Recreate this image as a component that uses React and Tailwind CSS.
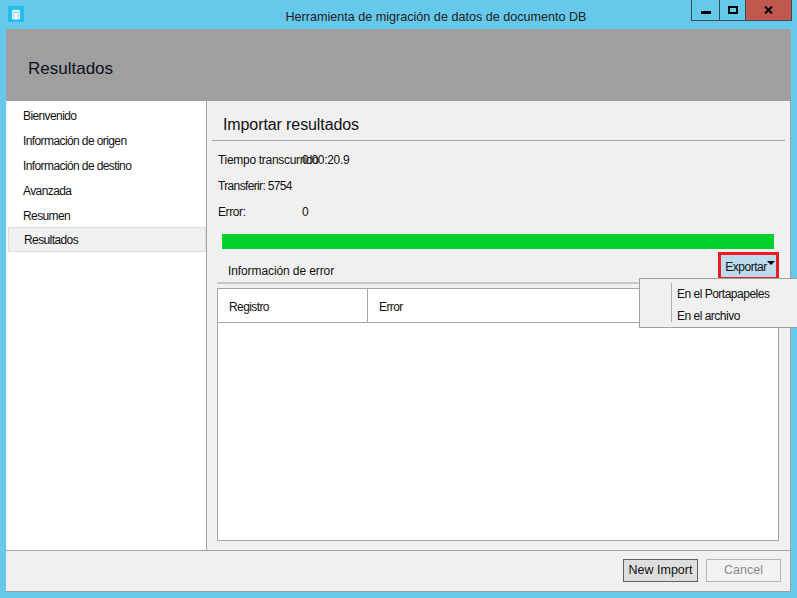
import React from "react";

const NAV_ITEMS = [
  "Bienvenido",
  "Información de origen",
  "Información de destino",
  "Avanzada",
  "Resumen",
];

const STATS = [
  { label: "Tiempo transcurrido", value: "0:00:20.9", tracking: "tracking-[-0.3px]" },
  { label: "Transferir: 5754", value: "", tracking: "tracking-[-0.65px]" },
  { label: "Error:", value: "0", tracking: "tracking-[-0.4px]" },
];

const App = () => {
  return (
    <div className="flex h-[598px] w-[797px] flex-col overflow-hidden bg-[#66c8ea] text-[12px] text-[#111] [font-family:'Liberation_Sans',Arial,sans-serif]">
      {/* title bar */}
      <div className="relative flex h-[29px] shrink-0 items-start justify-center">
        <div className="absolute left-[8px] top-[6px] flex h-[16px] w-[16px] items-center justify-center bg-[#23bdf0]">
          <svg width="10" height="11" viewBox="0 0 10 11" fill="none">
            <path d="M1 2C1 0.4 9 0.4 9 2V9.5C9 10.8 1 10.8 1 9.5Z" fill="#fff" />
            <path d="M1.5 2.8C3 3.8 7 3.8 8.5 2.8" stroke="#23bdf0" strokeWidth="0.8" />
            <path d="M3 5v4M7 5v4" stroke="#7fd6f5" strokeWidth="1.2" />
          </svg>
        </div>
        <span className="mt-[9px] pl-[75px] text-[12.6px] leading-[16px] text-[#222]">
          Herramienta de migración de datos de documento DB
        </span>
        <div className="absolute left-[691px] top-0 flex h-[21px] w-[101px] border border-t-0 border-[#3c4a55]">
          <div className="flex w-[27px] justify-center pt-[11px]">
            <div className="h-[3px] w-[10px] bg-black" />
          </div>
          <div className="flex w-[26px] justify-center border-l border-[#3c4a55] pt-[6px]">
            <div className="h-[8px] w-[10px] border-2 border-black" />
          </div>
          <div className="flex flex-1 justify-center border-l border-[#3c4a55] bg-[#c0584e] pt-[6px]">
            <svg width="9" height="8" viewBox="0 0 9 8">
              <path d="M1 0.5L8 7.5M8 0.5L1 7.5" stroke="#000" strokeWidth="2" />
            </svg>
          </div>
        </div>
      </div>

      {/* window body */}
      <div className="ml-[6px] flex h-[563px] w-[785px] flex-col border-b border-r border-[#a0a0a0] bg-[#f0f0f0]">
        <div className="flex h-[72px] shrink-0 items-center bg-[#9f9f9f] pl-[22px] pt-[7px] text-[17px] text-[#0b1020]">
          Resultados
        </div>

        <div className="flex min-h-0 flex-1">
          {/* sidebar */}
          <div className="w-[201px] shrink-0 border-x border-l-[#f0f0f0] border-r-[#a5a5a5] bg-white pl-[1px] pt-[2px]">
            {NAV_ITEMS.map((item) => (
              <div key={item} className="flex h-[25px] items-center pl-[15px] tracking-[-0.6px]">
                {item}
              </div>
            ))}
            <div className="-mt-[1px] flex h-[25px] items-center border border-[#dcdcdc] bg-[#f0f0f0] pl-[15px] pt-[1px] tracking-[-0.6px]">
              Resultados
            </div>
          </div>

          {/* main panel */}
          <div className="relative flex min-w-0 flex-1 flex-col">
            <div className="ml-[5px] mr-[5px] flex h-[40px] shrink-0 items-center border-b border-[#a5a5a5] pl-[11px] pt-[9px] text-[16px] tracking-[-0.1px]">
              Importar resultados
            </div>

            <div className="pl-[11px] pt-[6px]">
              {STATS.map((stat) => (
                <div key={stat.label} className={"flex h-[26px] items-center " + stat.tracking}>
                  <span className="w-[84px] whitespace-nowrap">{stat.label}</span>
                  <span className="whitespace-nowrap">{stat.value}</span>
                </div>
              ))}
            </div>

            <div className="ml-[15px] mt-[9px] h-[15px] w-[552px] shrink-0 bg-[#00d12c]" />

            <div className="ml-[10px] mr-[11px] flex h-[35px] shrink-0 items-end justify-between border-b-2 border-[#c8c8c8]">
              <span className="pb-[2px] pl-[11px] tracking-[-0.1px]">Información de error</span>
              <div className="mb-[2px] flex h-[28px] w-[61px] items-center justify-center border-[3px] border-[#ed1c24] bg-[#bcdcee] pl-[3px] pt-[2px] tracking-[-0.5px]">
                Exportar
                <span className="mb-[9px] h-0 w-0 border-x-[4px] border-t-[4px] border-x-transparent border-t-black" />
              </div>
            </div>

            <div className="mb-[9px] ml-[10px] mr-[11px] mt-[4px] flex min-h-0 flex-1 flex-col border border-[#a5a5a5] bg-white">
              <div className="flex h-[34px] shrink-0 border-b border-[#a5a5a5] pt-[0px]">
                <div className="flex w-[150px] items-center border-r border-[#a5a5a5] pl-[11px] pt-[3px] tracking-[-0.6px]">
                  Registro
                </div>
                <div className="flex flex-1 items-center pl-[11px] pt-[3px] tracking-[-0.6px]">Error</div>
              </div>
            </div>

            {/* dropdown menu */}
            <div className="absolute left-[432px] top-[177px] h-[50px] w-[160px] border border-[#a0a0a0] bg-[#f0f0f0] pl-[37px] pt-[4px] tracking-[-0.5px]">
              <div className="absolute bottom-[5px] left-[31px] top-[4px] w-px bg-[#b0b0b0]" />
              <div className="flex h-[22px] items-center whitespace-nowrap">En el Portapapeles</div>
              <div className="flex h-[22px] items-center whitespace-nowrap">En el archivo</div>
            </div>
          </div>
        </div>

        {/* footer */}
        <div className="flex h-[41px] shrink-0 justify-end gap-[8px] border-t border-[#a5a5a5] pr-[9px] pt-[8px] text-[12.5px]">
          <button className="h-[23px] w-[75px] border border-[#5f5f5f] bg-[#dedede]">New Import</button>
          <button className="h-[23px] w-[75px] border border-[#b5b5b5] bg-[#f2f2f2] text-[#8a8a8a]">Cancel</button>
        </div>
      </div>
    </div>
  );
};

export default App;
